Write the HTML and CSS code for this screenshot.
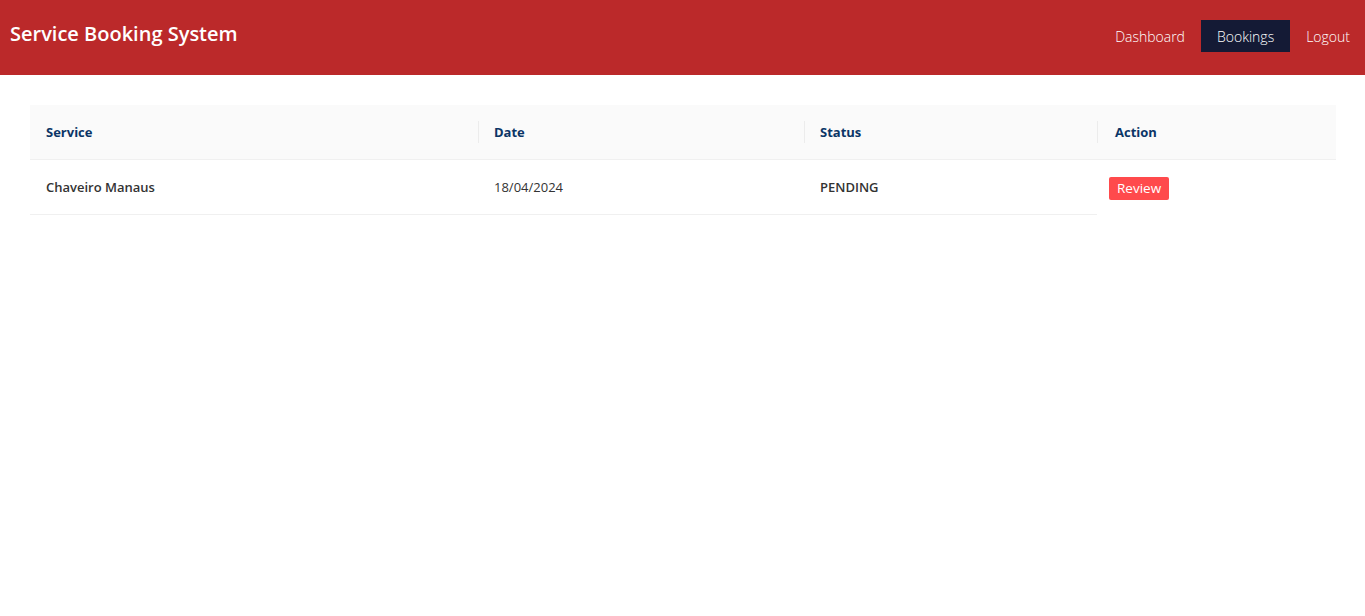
FILE: index.html
```html
<!DOCTYPE html>
<html>
<head>
<meta charset="utf-8">
<title>Service Booking System</title>
<link rel="stylesheet" href="styles.css">
</head>
<body>
<header class="topbar">
  <div class="brand">Service Booking System</div>
  <nav class="nav">
    <a class="nav-link">Dashboard</a>
    <a class="nav-link active">Bookings</a>
    <a class="nav-link">Logout</a>
  </nav>
</header>
<main class="content">
  <table class="bookings">
    <colgroup>
      <col class="c1"><col class="c2"><col class="c3"><col class="c4">
    </colgroup>
    <thead>
      <tr>
        <th>Service</th>
        <th class="sep">Date</th>
        <th class="sep">Status</th>
        <th class="sep action-h">Action</th>
      </tr>
    </thead>
    <tbody>
      <tr>
        <td class="strong">Chaveiro Manaus</td>
        <td>18/04/2024</td>
        <td class="strong">PENDING</td>
        <td class="action"><button class="btn-review">Review</button></td>
      </tr>
    </tbody>
  </table>
</main>
</body>
</html>
```
FILE: styles.css
```css
* { box-sizing: border-box; }
body {
  margin: 0;
  font-family: "Open Sans", "Noto Sans", sans-serif;
  background: #fff;
  color: #333;
}
.topbar {
  height: 75px;
  background: #bb292a;
  display: flex;
  align-items: flex-start;
  justify-content: space-between;
  padding: 0 15px 0 10px;
}
.brand {
  color: #fff;
  font-size: 20px;
  font-weight: 600;
  line-height: 28px;
  margin-top: 20px;
}
.nav {
  display: flex;
  margin-top: 20px;
}
.nav-link {
  color: #fff;
  font-size: 14px;
  font-weight: 300;
  height: 32px;
  line-height: 33px;
  padding: 0 16px;
}
.nav-link.active { background: #141a35; }
.nav-link:last-child { padding-right: 0; }
.content { padding: 30px 29px 0 30px; }
.bookings {
  width: 100%;
  border-collapse: collapse;
  table-layout: fixed;
  font-size: 13px;
}
.c1 { width: 448px; }
.c2 { width: 326px; }
.c3 { width: 293px; }
.bookings th {
  background: #fafafa;
  color: #0b3566;
  font-weight: 700;
  text-align: left;
  height: 54px;
  padding: 0 16px;
  border-bottom: 1px solid #f0f0f0;
  position: relative;
}
.bookings th.sep::before {
  content: "";
  position: absolute;
  left: 0;
  top: 50%;
  width: 1px;
  height: 22px;
  transform: translateY(-50%);
  background: #ececec;
}
.bookings th.action-h { padding-left: 18px; }
.bookings td {
  height: 55px;
  padding: 0 16px;
  border-bottom: 1px solid #f0f0f0;
  color: #333;
  vertical-align: middle;
}
.bookings td.strong { font-weight: 600; }
.bookings td.action {
  border-bottom: none;
  vertical-align: top;
  padding: 17px 12px 0;
}
.btn-review {
  display: block;
  background: #ff4a4c;
  color: #fff;
  border: none;
  border-radius: 2px;
  font-family: inherit;
  font-size: 13.5px;
  height: 23px;
  line-height: 23px;
  padding: 0 8px;
  cursor: pointer;
}
```
